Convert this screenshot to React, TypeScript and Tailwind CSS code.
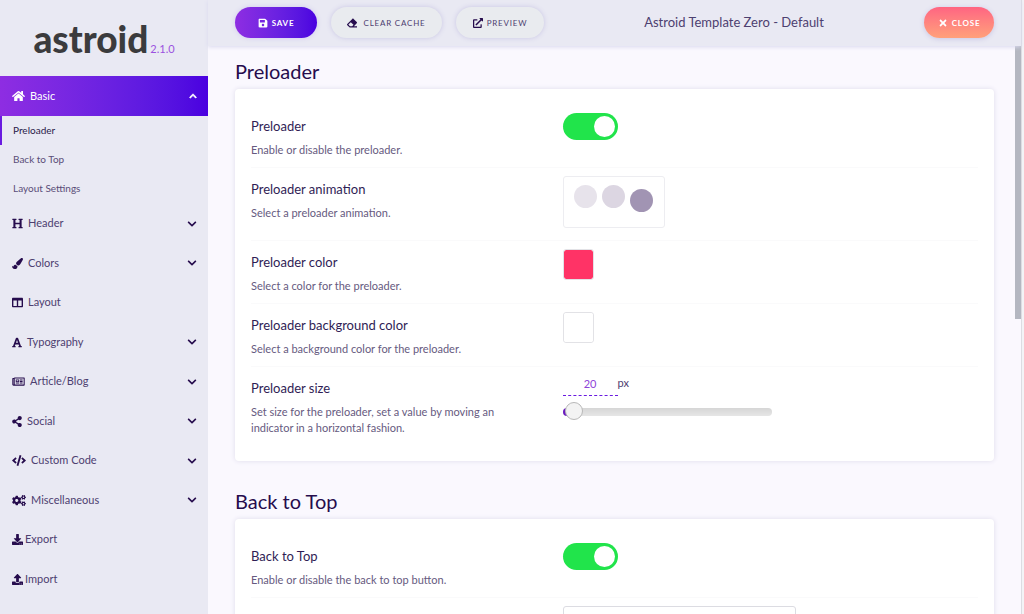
import React, { useState } from 'react';
import {
  FaChevronDown,
  FaChevronUp,
  FaCode,
  FaCogs,
  FaColumns,
  FaDownload,
  FaEraser,
  FaExternalLinkAlt,
  FaFont,
  FaHeading,
  FaHome,
  FaPaintBrush,
  FaRegNewspaper,
  FaSave,
  FaShareAlt,
  FaTimes,
  FaUpload,
} from 'react-icons/fa';

const basicLinks = ['Preloader', 'Back to Top', 'Layout Settings'];

const navItems = [
  { label: 'Header', icon: FaHeading, width: 'w-[11px]', gap: 'gap-[5px]', expandable: true },
  { label: 'Colors', icon: FaPaintBrush, width: 'w-[11px]', gap: 'gap-[5px]', expandable: true },
  { label: 'Layout', icon: FaColumns, width: 'w-[11px]', gap: 'gap-[5px]', expandable: false },
  { label: 'Typography', icon: FaFont, width: 'w-[10px]', gap: 'gap-[5px]', expandable: true },
  { label: 'Article/Blog', icon: FaRegNewspaper, width: 'w-[13px]', gap: 'gap-[5px]', expandable: true },
  { label: 'Social', icon: FaShareAlt, width: 'w-[10px]', gap: 'gap-[5px]', expandable: true },
  { label: 'Custom Code', icon: FaCode, width: 'w-[14px]', gap: 'gap-[5px]', expandable: true },
  { label: 'Miscellaneous', icon: FaCogs, width: 'w-[14px]', gap: 'gap-[5px]', expandable: true },
  { label: 'Export', icon: FaDownload, width: 'w-[11px]', gap: 'gap-0.5', expandable: false },
  { label: 'Import', icon: FaUpload, width: 'w-[11px]', gap: 'gap-0.5', expandable: false },
];

const Sidebar: React.FC = () => {
  const [active, setActive] = useState('Preloader');

  return (
    <aside className="w-52 shrink-0 bg-[#e9e9f3]">
      <div className="flex h-[76px] items-baseline justify-center gap-0.5 pt-3 text-[#3b3b3d]">
        <span className="text-[37px] leading-[54px] font-black">astroid</span>
        <span className="text-[11px] text-[#9b51e0]">2.1.0</span>
      </div>
      <nav>
        <button className="flex h-10 w-full items-center gap-[5px] bg-linear-to-r from-[#8e2de2] to-[#4a00e0] pr-[11px] pl-3 text-[11px] text-white">
          <FaHome className="h-3 w-[13px]" />
          <span>Basic</span>
          <FaChevronUp size={8} strokeWidth={40} stroke="currentColor" className="ml-auto" />
        </button>
        <ul className="pb-px">
          {basicLinks.map(link => (
            <li key={link}>
              <a
                href="#"
                onClick={() => setActive(link)}
                className={`block border-l-2 pl-[11px] text-[10px] leading-[29px] ${
                  active === link
                    ? 'border-[#6a1be0] text-[#2a1a4a]'
                    : 'border-transparent text-[#5a4d78]'
                }`}
              >
                {link}
              </a>
            </li>
          ))}
        </ul>
        <ul>
          {navItems.map(({ label, icon: Icon, width, gap, expandable }) => (
            <li key={label} className="h-[39px] even:h-10">
              <button className={`flex h-full w-full items-center pr-[11px] pl-3 text-[11px] text-[#4d4070] ${gap}`}>
                <Icon className={`h-[11px] shrink-0 text-[#260c4d] ${width}`} />
                <span>{label}</span>
                {expandable && <FaChevronDown size={10} className="ml-auto text-[#260c4d]" />}
              </button>
            </li>
          ))}
        </ul>
      </nav>
    </aside>
  );
};

const TopBar: React.FC = () => (
  <header className="z-10 flex h-[46px] shrink-0 items-center bg-[#e9e9f3] px-[27px] pb-px text-[8px] tracking-widest text-[#4d4070] shadow-[0_1px_4px_#d9d8ee]">
    <button className="flex h-[31px] w-[82px] items-center justify-center gap-1 rounded-full bg-linear-to-r from-[#8e2de2] to-[#4a00e0] font-bold text-white shadow-[0_0_5px_#cfc9ee]">
      <FaSave size={10} />
      SAVE
    </button>
    <button className="ml-3.5 flex h-[31px] w-[111px] items-center justify-center gap-1.5 rounded-full bg-[#e9ebef] shadow-[0_0_5px_#c9c6e4]">
      <FaEraser size={10} className="text-[#260c4d]" />
      CLEAR CACHE
    </button>
    <button className="ml-3.5 flex h-[31px] w-[88px] items-center justify-center gap-1 rounded-full bg-[#e9ebef] shadow-[0_0_5px_#c9c6e4]">
      <FaExternalLinkAlt size={10} className="text-[#260c4d]" />
      PREVIEW
    </button>
    <h1 className="flex-1 text-center text-[13px] tracking-normal">Astroid Template Zero - Default</h1>
    <button className="flex h-[31px] w-[70px] items-center justify-center gap-1 rounded-full bg-linear-to-b from-[#ff6482] to-[#ffa07a] font-bold text-white shadow-[0_1px_5px_#c9c6e4]">
      <FaTimes size={10} />
      CLOSE
    </button>
  </header>
);

interface RowProps {
  id: string;
  title: string;
  hint: string;
  children: React.ReactNode;
}

const Row: React.FC<RowProps> = ({ id, title, hint, children }) => (
  <div className="grid grid-cols-[3fr_4fr] border-b border-[#fafafb] pt-2 pb-[9px] last:border-b-0">
    <div className="pt-px pr-10">
      <label htmlFor={id} className="block text-[13px] leading-6 text-[#2f1d55]">
        {title}
      </label>
      <p className="mt-1 text-[11px] leading-4 text-[#665a80]">{hint}</p>
    </div>
    <div>{children}</div>
  </div>
);

const Section: React.FC<{ title: string; children: React.ReactNode }> = ({ title, children }) => (
  <section>
    <h2 className="mb-1 text-xl leading-7 text-[#260c4d]">{title}</h2>
    <div className="rounded bg-white px-4 py-4 shadow-[0_0_5px_#dfdcec]">{children}</div>
  </section>
);

const Toggle: React.FC<{ id: string }> = ({ id }) => {
  const [on, setOn] = useState(true);

  return (
    <input
      id={id}
      type="checkbox"
      role="switch"
      checked={on}
      onChange={() => setOn(!on)}
      className="flex h-[27px] w-[55px] cursor-pointer appearance-none items-center rounded-full bg-gray-300 px-[3px] before:size-[21px] before:rounded-full before:bg-white checked:justify-end checked:bg-[#21e44b]"
    />
  );
};

const ColorPicker: React.FC<{ id: string; initial: string }> = ({ id, initial }) => {
  const [color, setColor] = useState(initial);

  return (
    <input
      id={id}
      type="color"
      value={color}
      onChange={e => setColor(e.target.value)}
      className="block size-[31px] cursor-pointer appearance-none rounded-[3px] border border-[#e2e2e6] [&::-webkit-color-swatch]:rounded-xs [&::-webkit-color-swatch]:border-0 [&::-webkit-color-swatch-wrapper]:p-0"
    />
  );
};

const SizeSlider: React.FC<{ id: string }> = ({ id }) => {
  const [size, setSize] = useState(20);

  return (
    <>
      <div className="flex items-start text-[11px] text-[#4d4070]">
        <input
          id={id}
          type="text"
          value={size}
          onChange={e => setSize(Number(e.target.value) || 0)}
          className="h-[21px] w-[55px] border-b border-dashed border-[#6a1be0] pb-1 text-center text-[#8e44d8]"
        />
        <span className="leading-4">px</span>
      </div>
      <input
        type="range"
        aria-label="Preloader size slider"
        min={1}
        max={1500}
        value={size}
        onChange={e => setSize(Number(e.target.value))}
        className="mt-2 block h-4 w-[209px] cursor-pointer appearance-none [&::-webkit-slider-runnable-track]:h-2 [&::-webkit-slider-runnable-track]:rounded-full [&::-webkit-slider-runnable-track]:bg-[linear-gradient(to_right,#6a1bc0_8px,transparent_8px),linear-gradient(#d6d6d6,#e6e6e6)] [&::-webkit-slider-thumb]:-mt-[6px] [&::-webkit-slider-thumb]:size-[18px] [&::-webkit-slider-thumb]:appearance-none [&::-webkit-slider-thumb]:rounded-full [&::-webkit-slider-thumb]:border [&::-webkit-slider-thumb]:border-[#b8b8b8] [&::-webkit-slider-thumb]:bg-[#f3f3f3]"
      />
    </>
  );
};

const App: React.FC = () => (
  <div className="flex h-screen overflow-hidden bg-[#faf8fe] font-[Lato,sans-serif]">
    <Sidebar />
    <div className="flex min-w-0 flex-1 flex-col">
      <TopBar />
      <div className="flex min-h-0 flex-1">
        <main className="flex flex-1 flex-col gap-[26px] overflow-hidden pt-[11px] pr-[21px] pl-[27px]">
          <Section title="Preloader">
            <Row id="preloader" title="Preloader" hint="Enable or disable the preloader.">
              <Toggle id="preloader" />
            </Row>
            <Row id="animation" title="Preloader animation" hint="Select a preloader animation.">
              <button
                id="animation"
                className="mb-[3px] flex h-[52px] w-[102px] justify-center gap-[5px] rounded-[3px] border border-[#ededf1] pt-2"
              >
                <span className="size-[23px] rounded-full bg-[#e7e3eb]" />
                <span className="size-[23px] rounded-full bg-[#dcd6e2]" />
                <span className="mt-1 size-[23px] rounded-full bg-[#a194b3]" />
              </button>
            </Row>
            <Row id="color" title="Preloader color" hint="Select a color for the preloader.">
              <ColorPicker id="color" initial="#ff3366" />
            </Row>
            <Row
              id="background"
              title="Preloader background color"
              hint="Select a background color for the preloader."
            >
              <ColorPicker id="background" initial="#ffffff" />
            </Row>
            <Row
              id="size"
              title="Preloader size"
              hint="Set size for the preloader, set a value by moving an indicator in a horizontal fashion."
            >
              <SizeSlider id="size" />
            </Row>
          </Section>
          <Section title="Back to Top">
            <Row id="back-to-top" title="Back to Top" hint="Enable or disable the back to top button.">
              <Toggle id="back-to-top" />
            </Row>
            <div className="grid grid-cols-[3fr_4fr] pt-2">
              <input
                type="text"
                aria-label="Back to Top icon"
                className="col-start-2 h-8 w-[233px] rounded-[3px] border border-[#dcdce2]"
              />
            </div>
          </Section>
        </main>
        {/* scroll position indicator */}
        <div className="w-1.5">
          <div className="h-[48%] bg-[#b4b7c1]" />
        </div>
      </div>
    </div>
    <div className="w-[3px] shrink-0 border-l border-[#dcdce2] bg-[#f3f3f6]" />
  </div>
);

export default App;
